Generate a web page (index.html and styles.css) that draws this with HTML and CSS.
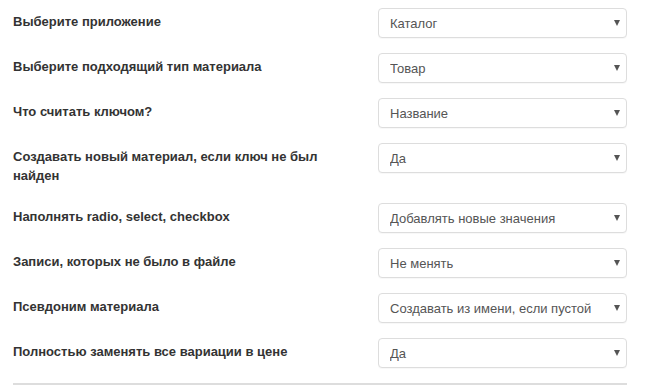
FILE: index.html
```html
<!DOCTYPE html>
<html>
<head>
    <title>Настройки импорта</title>
    <link rel="stylesheet" href="styles.css">
</head>
<body>
    <div id="container">
        <div class="form_group">
            <label class="control_label">Выберите приложение</label>
            <div class="select_wrap">
                <select><option>Каталог</option></select>
            </div>
        </div>
        <div class="form_group">
            <label class="control_label">Выберите подходящий тип материала</label>
            <div class="select_wrap">
                <select><option>Товар</option></select>
            </div>
        </div>
        <div class="form_group">
            <label class="control_label">Что считать ключом?</label>
            <div class="select_wrap">
                <select><option>Название</option></select>
            </div>
        </div>
        <div class="form_group">
            <label class="control_label">Создавать новый материал, если ключ не был найден</label>
            <div class="select_wrap">
                <select><option>Да</option></select>
            </div>
        </div>
        <div class="form_group">
            <label class="control_label">Наполнять radio, select, checkbox</label>
            <div class="select_wrap">
                <select><option>Добавлять новые значения</option></select>
            </div>
        </div>
        <div class="form_group">
            <label class="control_label">Записи, которых не было в файле</label>
            <div class="select_wrap">
                <select><option>Не менять</option></select>
            </div>
        </div>
        <div class="form_group">
            <label class="control_label">Псевдоним материала</label>
            <div class="select_wrap">
                <select><option>Создавать из имени, если пустой</option></select>
            </div>
        </div>
        <div class="form_group">
            <label class="control_label">Полностью заменять все вариации в цене</label>
            <div class="select_wrap">
                <select><option>Да</option></select>
            </div>
        </div>
        <hr class="divider">
    </div>
</body>
</html>
```

FILE: styles.css
```css
/* General body styling */
body {
    margin: 0;
    font-family: 'Liberation Sans', Arial, sans-serif;
    font-size: 13px;
    color: #333;
    background-color: #fff;
}

/* Main container */
#container {
    width: 614px;
    padding: 8px 0 0 13px;
}

/* One row: label on the left, select on the right */
.form_group {
    display: grid;
    grid-template-columns: 335px 249px;
    column-gap: 30px;
    align-items: start;
    margin-bottom: 15px;
}

.control_label {
    font-weight: bold;
    line-height: 18.5px;
    padding: 5px 0 3px;
}

/* Select box with its small arrow */
.select_wrap {
    position: relative;
}

.select_wrap::after {
    content: "";
    position: absolute;
    right: 7px;
    top: 12px;
    border-left: 3px solid transparent;
    border-right: 3px solid transparent;
    border-top: 6px solid #555;
    pointer-events: none;
}

select {
    -webkit-appearance: none;
    appearance: none;
    width: 100%;
    height: 30px;
    padding: 0 20px 0 11px;
    border: 1px solid #ddd;
    border-radius: 4px;
    background-color: #fff;
    font-family: 'Liberation Sans', Arial, sans-serif;
    font-size: 13px;
    color: #555;
    box-shadow: 0 1px 1px rgba(0, 0, 0, 0.03);
}

.divider {
    margin: 5px 0 0;
    border: none;
    border-top: 2px solid #ddd;
    width: 614px;
}
```
